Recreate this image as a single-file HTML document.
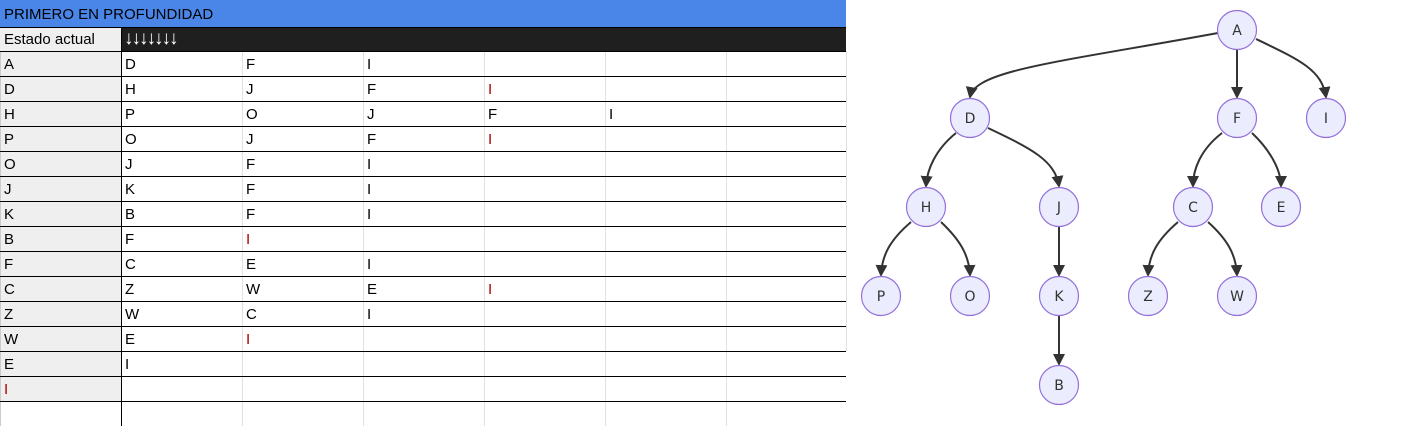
<!DOCTYPE html>
<html><head><meta charset="utf-8"><style>
body{margin:0;width:1417px;height:426px;background:#fff;position:relative;overflow:hidden;font-family:"Liberation Sans",Arial,sans-serif;font-size:15px;color:#000}
.a{position:absolute}
.h{position:absolute;left:0;width:846px;height:1px;background:#000}
.v{position:absolute;top:51px;width:1px;height:375px;background:#e0e0e0}
.t{position:absolute;line-height:25px;font-family:"Liberation Sans",Arial,sans-serif}
.r{color:#a00}
</style></head><body>
<div class="a" style="left:0;top:0;width:846px;height:27px;background:#4a86e8;border-bottom:1px solid #000"></div>
<div class="t" style="left:4px;top:1px;line-height:27px;font-size:15px">PRIMERO EN PROFUNDIDAD</div>
<div class="a" style="left:0;top:28px;width:121px;height:23px;background:#efefef"></div>
<div class="a" style="left:121px;top:28px;width:725px;height:23px;background:#1f1f1f"></div>
<div class="t" style="left:4px;top:27px;">Estado actual</div>
<div class="t" style="left:124px;top:26px;color:#fff;font-weight:bold;font-size:19px;letter-spacing:-2px">↓↓↓↓↓↓↓</div>
<div class="a" style="left:0;top:51px;width:121px;height:350px;background:#efefef"></div>
<div class="a" style="left:0;top:51px;width:1px;height:375px;background:#ccc"></div>
<div class="v" style="left:242px"></div><div class="v" style="left:363px"></div><div class="v" style="left:484px"></div><div class="v" style="left:605px"></div><div class="v" style="left:726px"></div><div class="v" style="left:846px;height:300px"></div>
<div class="a" style="left:121px;top:28px;width:1px;height:398px;background:#000"></div>
<div class="h" style="top:51px"></div><div class="h" style="top:76px"></div><div class="h" style="top:101px"></div><div class="h" style="top:126px"></div><div class="h" style="top:151px"></div><div class="h" style="top:176px"></div><div class="h" style="top:201px"></div><div class="h" style="top:226px"></div><div class="h" style="top:251px"></div><div class="h" style="top:276px"></div><div class="h" style="top:301px"></div><div class="h" style="top:326px"></div><div class="h" style="top:351px"></div><div class="h" style="top:376px"></div><div class="h" style="top:401px"></div>
<div id="rows"></div>
<script>
var d=[["A","D","F","I"],["D","H","J","F","*I"],["H","P","O","J","F","I"],["P","O","J","F","*I"],["O","J","F","I"],["J","K","F","I"],["K","B","F","I"],["B","F","*I"],["F","C","E","I"],["C","Z","W","E","*I"],["Z","W","C","I"],["W","E","*I"],["E","I"],["*I"]];
var h="";d.forEach(function(r,i){r.forEach(function(c,j){var red=c[0]=="*";if(red)c=c.slice(1);h+='<div class="t'+(red?' r':'')+'" style="left:'+(4+121*j)+'px;top:'+(52+25*i)+'px">'+c+'</div>';});});
document.getElementById("rows").innerHTML=h;
</script>
<svg class="a" style="left:0;top:0" width="1417" height="426">
<defs><marker id="m" markerWidth="14" markerHeight="14" refX="10" refY="6" orient="auto" markerUnits="userSpaceOnUse"><path d="M0,0L12,6L0,12z" fill="#333"/></marker></defs>
<g fill="none" stroke="#333" stroke-width="2" marker-end="url(#m)">
<path d="M1218,33C1060,62 975,70 970,97"/>
<path d="M1237,50L1237,97"/>
<path d="M1256,39C1300,60 1322,70 1326,97"/>
<path d="M956,133C935,150 927,170 926,186"/>
<path d="M988,128C1030,148 1055,160 1059,186"/>
<path d="M1222,133C1200,150 1193,170 1193,186"/>
<path d="M1252,133C1270,150 1281,170 1281,186"/>
<path d="M911,222C890,240 882,255 881,275"/>
<path d="M941,222C960,240 969,255 970,275"/>
<path d="M1059,227L1059,275"/>
<path d="M1178,222C1157,240 1149,255 1148,275"/>
<path d="M1208,222C1228,240 1236,255 1237,275"/>
<path d="M1059,316L1059,364"/>
</g>
<g fill="#ececff" stroke="#9370db" stroke-width="1.2">
<circle cx="1237" cy="30" r="19.5"/><circle cx="970" cy="118" r="19.5"/><circle cx="1237" cy="118" r="19.5"/><circle cx="1326" cy="118" r="19.5"/>
<circle cx="926" cy="207" r="19.5"/><circle cx="1059" cy="207" r="19.5"/><circle cx="1193" cy="207" r="19.5"/><circle cx="1281" cy="207" r="19.5"/>
<circle cx="881" cy="296" r="19.5"/><circle cx="970" cy="296" r="19.5"/><circle cx="1059" cy="296" r="19.5"/><circle cx="1148" cy="296" r="19.5"/><circle cx="1237" cy="296" r="19.5"/><circle cx="1059" cy="385" r="19.5"/>
</g>
<g font-family="DejaVu Sans, sans-serif" font-size="14" fill="#333" text-anchor="middle">
<text x="1237" y="35">A</text><text x="970" y="123">D</text><text x="1237" y="123">F</text><text x="1326" y="123">I</text>
<text x="926" y="212">H</text><text x="1059" y="212">J</text><text x="1193" y="212">C</text><text x="1281" y="212">E</text>
<text x="881" y="301">P</text><text x="970" y="301">O</text><text x="1059" y="301">K</text><text x="1148" y="301">Z</text><text x="1237" y="301">W</text><text x="1059" y="390">B</text>
</g>
</svg>
</body></html>
